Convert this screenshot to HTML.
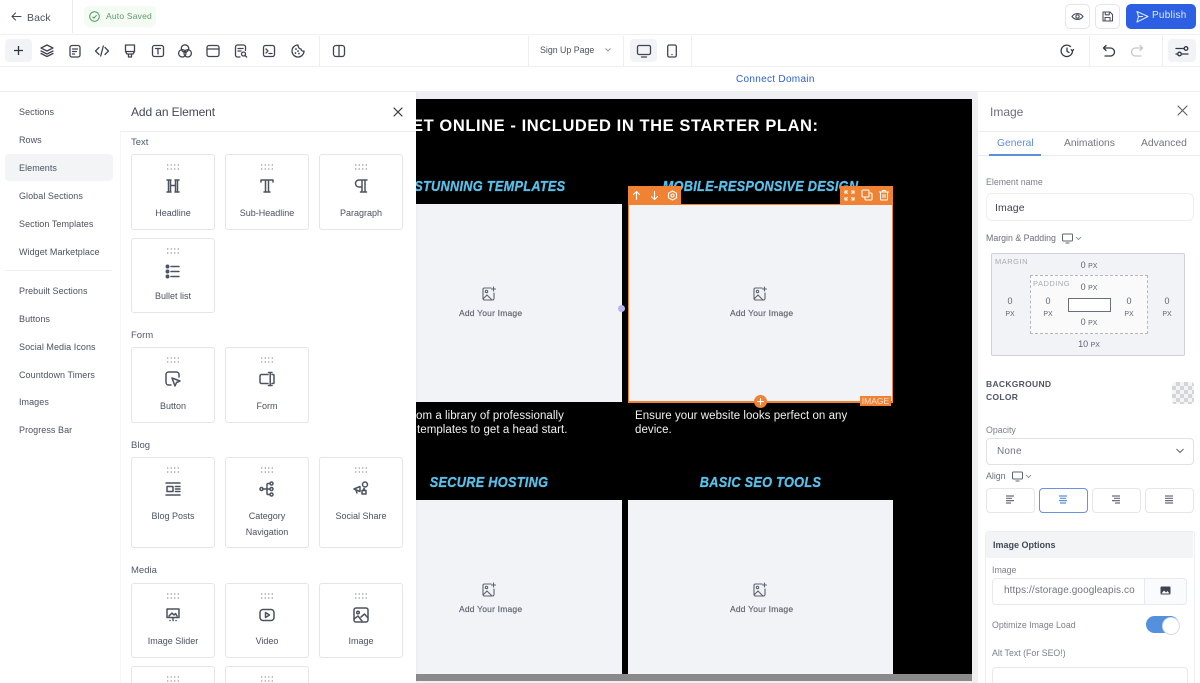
<!DOCTYPE html>
<html><head><meta charset="utf-8"><style>
html,body{margin:0;padding:0;width:1200px;height:683px;overflow:hidden;background:#fff}
body{position:relative;font-family:"Liberation Sans",sans-serif;color:#4a5160;-webkit-font-smoothing:antialiased}
.a,.t,.c,svg{position:absolute}
.t{white-space:nowrap;line-height:14px}
.nav{left:19px;font-size:9px;letter-spacing:.06px;color:#4a5160}
.sec{left:131px;font-size:9.5px;letter-spacing:0;color:#50586a}
.c{width:82px;border:1px solid #e3e5e9;border-radius:3px;background:#fff}
.c i{position:absolute;left:34px;top:8px;width:14px;height:8px;background:radial-gradient(circle,#a0a4ad .7px,transparent .9px) 0 0/3.500px 4px}
.l{position:absolute;left:0;width:82px;text-align:center;font-size:9px;letter-spacing:0;color:#4a5160;line-height:16px}
.ic{position:absolute;left:32px;top:22px;width:18px;height:18px;fill:none;stroke:#4c525f;stroke-width:1.500;stroke-linecap:round;stroke-linejoin:round}
.tb{fill:none;stroke:#3f4450;stroke-width:1.300;stroke-linecap:round;stroke-linejoin:round;width:16px;height:16px;top:43px}
.h{font-family:"Liberation Sans",sans-serif;font-weight:700;font-style:italic;color:#58c0ea;font-size:14.500px;letter-spacing:.3px;text-align:center;transform:scaleX(.88);-webkit-text-stroke:.3px #58c0ea}
.ph{background:#f1f3f7}
.add{font-size:8.500px;color:#5d626d;letter-spacing:.2px;-webkit-text-stroke:.15px #5d626d}
.w{color:#f2f2f2;font-size:11.500px;letter-spacing:.05px;line-height:14px}
.px{font-size:9px;color:#5f6572;text-align:center;line-height:12px}
.px small{font-size:7px}
.lab{font-size:8.800px;letter-spacing:0;color:#7a7f8a}
.alb{top:488px;height:23px;border:1px solid #e4e6ea;border-radius:4px;background:#fff}
.wi{fill:none;stroke:#fff;stroke-width:1.100;stroke-linecap:round;stroke-linejoin:round}
</style></head><body>

<!-- top bars -->
<div class="a" style="left:0;top:34px;width:1200px;height:1px;background:#eef0f2"></div>
<div class="a" style="left:0;top:66px;width:1200px;height:1px;background:#eef0f2"></div>
<div class="a" style="left:72px;top:0;width:1px;height:33px;background:#e9ebee"></div>
<svg style="left:10px;top:10px" width="13" height="13" viewBox="0 0 13 13" fill="none" stroke="#454a56" stroke-width="1.100" stroke-linecap="round" stroke-linejoin="round"><path d="M11 6.500H2.500M5.500 3 2 6.500 5.500 10"/></svg>
<div class="t" style="left:27px;top:11px;font-size:10.500px;letter-spacing:.1px;color:#4a5160">Back</div>
<div class="a" style="left:84px;top:6px;width:72px;height:21px;border-radius:5px;background:#f3fbf3"></div>
<svg style="left:88px;top:10px" width="13" height="13" viewBox="0 0 13 13" fill="none" stroke="#4f9a5c" stroke-width="1"><circle cx="6.500" cy="6.500" r="4.800"/><path d="M4.500 6.700 6 8.100 8.600 5.200"/></svg>
<div class="t" style="left:106px;top:9px;font-size:8.500px;letter-spacing:.2px;color:#5c9a68">Auto Saved</div>

<div class="a" style="left:1065px;top:4px;width:23px;height:23px;border:1px solid #e3e5e9;border-radius:5px"></div>
<svg style="left:1071px;top:10px" width="13" height="13" viewBox="0 0 13 13" fill="none" stroke="#4a4f5c" stroke-width="1.100"><path d="M1 6.500C3.800 2.600 9.200 2.600 12 6.500 9.200 10.400 3.800 10.400 1 6.500Z"/><circle cx="6.500" cy="6.500" r="1.700"/></svg>
<div class="a" style="left:1095px;top:4px;width:23px;height:23px;border:1px solid #e3e5e9;border-radius:5px"></div>
<svg style="left:1101px;top:10px" width="13" height="13" viewBox="0 0 13 13" fill="none" stroke="#4a4f5c" stroke-width="1.100" stroke-linejoin="round"><path d="M2 2h7l2.500 2.500V11H2ZM4.300 2v2.800h4V2M4 11V7.500h5V11"/></svg>
<div class="a" style="left:1126px;top:4px;width:70px;height:25px;border-radius:5px;background:#2d5fe3"></div>
<svg style="left:1135px;top:9px" width="15" height="15" viewBox="0 0 15 15" fill="none" stroke="#dfe8ff" stroke-width="1.100" stroke-linejoin="round"><path d="M2 2.500 13 7.500 2 13 3.500 7.500ZM3.500 7.500H8"/></svg>
<div class="t" style="left:1152px;top:9px;font-size:10px;letter-spacing:.25px;color:#dfe8ff">Publish</div>

<!-- tool row -->
<div class="a" style="left:5px;top:39px;width:27px;height:23px;border-radius:4px;background:#f1f3f6"></div>
<svg style="left:12px;top:44px" width="13" height="13" viewBox="0 0 13 13" fill="none" stroke="#2f3440" stroke-width="1.300"><path d="M6.500 2v9M2 6.500h9"/></svg>
<svg class="tb" style="left:39px" viewBox="0 0 16 16"><path d="M8 2 14 5 8 8 2 5ZM2 8l6 3 6-3M2 10.500l6 3 6-3"/></svg>
<svg class="tb" style="left:67px" viewBox="0 0 16 16"><rect x="3" y="2.500" width="10" height="11.500" rx="2"/><path d="M5.500 6h5M5.500 8.500h4M5.500 11h2"/></svg>
<svg class="tb" style="left:94px" viewBox="0 0 16 16"><path d="M5 4.500 1.500 8 5 11.500M11 4.500 14.500 8 11 11.500M9.300 3 6.700 13"/></svg>
<svg class="tb" style="left:122px" viewBox="0 0 16 16"><path d="M3.500 2h9v6.500h-9ZM3.500 8.500 5 11h6l1.500-2.500M6.500 11v3h3v-3"/></svg>
<svg class="tb" style="left:150px" viewBox="0 0 16 16"><rect x="2.500" y="2.500" width="11" height="11" rx="2"/><path d="M5.500 5.500h5M8 5.500v5.500"/></svg>
<svg class="tb" style="left:177px" viewBox="0 0 16 16"><circle cx="8" cy="5.500" r="3.700"/><circle cx="5.300" cy="10.300" r="3.700"/><circle cx="10.700" cy="10.300" r="3.700"/></svg>
<svg class="tb" style="left:205px" viewBox="0 0 16 16"><rect x="2" y="2.500" width="12" height="11" rx="2"/><path d="M2 6h12"/></svg>
<svg class="tb" style="left:233px" viewBox="0 0 16 16"><path d="M7 14H4.500a2 2 0 0 1-2-2V4a2 2 0 0 1 2-2h6a2 2 0 0 1 2 2v3.500M5 5.500h5M5 8h3"/><circle cx="10.500" cy="11" r="2"/><path d="M12 12.500l1.700 1.500"/></svg>
<svg class="tb" style="left:261px" viewBox="0 0 16 16"><rect x="2.500" y="2.500" width="11" height="11" rx="2"/><path d="M5 6l2 2-2 2M8 10.500h3"/></svg>
<svg class="tb" style="left:290px" viewBox="0 0 16 16"><path d="M8 2a6 6 0 1 0 6 6c-1.500.5-3-.5-3-2-1.500 0-3-1.500-3-4Z"/><path d="M6 6v.1M5.500 10v.1M9 10.500v.1M8 8v.1" stroke-width="1.800"/></svg>
<div class="a" style="left:319px;top:36px;width:1px;height:30px;background:#eceef1"></div>
<svg class="tb" style="left:331px" viewBox="0 0 16 16"><rect x="2.500" y="2.500" width="11" height="11" rx="2.500"/><path d="M8 2.500v11"/></svg>

<div class="a" style="left:528px;top:36px;width:1px;height:30px;background:#eceef1"></div>
<div class="t" style="left:540px;top:43px;font-size:8.800px;letter-spacing:0;color:#4a5160">Sign Up Page</div>
<svg style="left:604px;top:47px" width="8" height="6" viewBox="0 0 8 6" fill="none" stroke="#8a8f99" stroke-width=".9"><path d="M1.500 1.500 4 4 6.500 1.500"/></svg>
<div class="a" style="left:623px;top:36px;width:1px;height:30px;background:#eceef1"></div>
<div class="a" style="left:630px;top:39px;width:27px;height:23px;border-radius:4px;background:#f1f3f6"></div>
<svg class="tb" style="left:636px" viewBox="0 0 16 16"><rect x="1.500" y="2.500" width="13" height="9" rx="1.500"/><path d="M5.500 14h5"/></svg>
<svg class="tb" style="left:664px" viewBox="0 0 16 16"><rect x="3.700" y="2" width="8.600" height="12" rx="1.500"/><path d="M8 11.500v.1"/></svg>
<div class="a" style="left:691px;top:36px;width:1px;height:30px;background:#eceef1"></div>

<svg class="tb" style="left:1059px;stroke:#333844" viewBox="0 0 16 16"><path d="M13.500 8A5.700 5.700 0 1 1 11.500 3.500M8 5v3.300l2 1.200M14.500 6.500l-1 1.500-1.300-1.300"/></svg>
<div class="a" style="left:1089px;top:36px;width:1px;height:30px;background:#eceef1"></div>
<svg class="tb" style="left:1101px;stroke:#333844" viewBox="0 0 16 16"><path d="M5 2.500 2.500 5 5 7.500M2.500 5h7a3.500 3.500 0 0 1 0 8H4"/></svg>
<svg class="tb" style="left:1129px;stroke:#c4c7cd" viewBox="0 0 16 16"><path d="M11 2.500 13.500 5 11 7.500M13.500 5h-7a3.500 3.500 0 0 0 0 8H12"/></svg>
<div class="a" style="left:1162px;top:36px;width:1px;height:30px;background:#eceef1"></div>
<div class="a" style="left:1168px;top:39px;width:28px;height:23px;border-radius:4px;background:#f1f3f6"></div>
<svg class="tb" style="left:1174px;stroke:#333844" viewBox="0 0 16 16"><path d="M2 5.500h8M2 11h2"/><circle cx="12" cy="5.500" r="1.800"/><path d="M7.500 11H14"/><circle cx="5.500" cy="11" r="1.800"/></svg>

<div class="t" style="left:736px;top:73px;font-size:10px;letter-spacing:.3px;color:#2d5fd0">Connect Domain</div>

<!-- work area -->
<div class="a" style="left:0;top:91px;width:1200px;height:592px;background:#eff0f1"></div>

<!-- canvas -->
<div class="a" style="left:416px;top:99px;width:556px;height:575px;background:#000;overflow:hidden">
  <div class="t" style="left:-4px;top:18px;font-size:16.500px;font-weight:700;letter-spacing:.58px;color:#fff;line-height:19px">ET ONLINE - INCLUDED IN THE STARTER PLAN:</div>
  <div class="t h" style="left:-12px;top:81px;width:170px;line-height:15px">STUNNING TEMPLATES</div>
  <div class="t h" style="left:212px;top:81px;width:265px;line-height:15px">MOBILE-RESPONSIVE DESIGN</div>
  <div class="a ph" style="left:0;top:105px;width:206px;height:198px"></div>
  <div class="a ph" style="left:212px;top:105px;width:265px;height:198px"></div>
  <div class="t w" style="left:0;top:310px">om a library of professionally</div>
  <div class="t w" style="left:1px;top:324px">templates to get a head start.</div>
  <div class="t w" style="left:219px;top:310px">Ensure your website looks perfect on any</div>
  <div class="t w" style="left:219px;top:324px">device.</div>
  <div class="t h" style="left:0;top:377px;width:146px;line-height:15px">SECURE HOSTING</div>
  <div class="t h" style="left:212px;top:377px;width:265px;line-height:15px">BASIC SEO TOOLS</div>
  <div class="a ph" style="left:0;top:401px;width:206px;height:174px"></div>
  <div class="a ph" style="left:212px;top:401px;width:265px;height:174px"></div>
</div>
<div class="a" style="left:416px;top:674px;width:556px;height:7px;background:#8a8a8a"></div>

<!-- placeholders -->
<svg style="left:481px;top:286px" width="16" height="16" viewBox="0 0 16 16" fill="none" stroke="#5d626d" stroke-width="1.100" stroke-linecap="round" stroke-linejoin="round"><path d="M10 2H3.500A1.500 1.500 0 0 0 2 3.500v9A1.500 1.500 0 0 0 3.500 14h8a1.500 1.500 0 0 0 1.500-1.500V7M2.500 12.500 6 9l5 5M12.500 1v4M10.500 3h4"/><circle cx="5.500" cy="5.500" r="1.200"/></svg>
<div class="t add" style="left:459px;top:306px">Add Your Image</div>
<svg style="left:752px;top:286px" width="16" height="16" viewBox="0 0 16 16" fill="none" stroke="#5d626d" stroke-width="1.100" stroke-linecap="round" stroke-linejoin="round"><path d="M10 2H3.500A1.500 1.500 0 0 0 2 3.500v9A1.500 1.500 0 0 0 3.500 14h8a1.500 1.500 0 0 0 1.500-1.500V7M2.500 12.500 6 9l5 5M12.500 1v4M10.500 3h4"/><circle cx="5.500" cy="5.500" r="1.200"/></svg>
<div class="t add" style="left:730px;top:306px">Add Your Image</div>
<svg style="left:481px;top:582px" width="16" height="16" viewBox="0 0 16 16" fill="none" stroke="#5d626d" stroke-width="1.100" stroke-linecap="round" stroke-linejoin="round"><path d="M10 2H3.500A1.500 1.500 0 0 0 2 3.500v9A1.500 1.500 0 0 0 3.500 14h8a1.500 1.500 0 0 0 1.500-1.500V7M2.500 12.500 6 9l5 5M12.500 1v4M10.500 3h4"/><circle cx="5.500" cy="5.500" r="1.200"/></svg>
<div class="t add" style="left:459px;top:602px">Add Your Image</div>
<svg style="left:752px;top:582px" width="16" height="16" viewBox="0 0 16 16" fill="none" stroke="#5d626d" stroke-width="1.100" stroke-linecap="round" stroke-linejoin="round"><path d="M10 2H3.500A1.500 1.500 0 0 0 2 3.500v9A1.500 1.500 0 0 0 3.500 14h8a1.500 1.500 0 0 0 1.500-1.500V7M2.500 12.500 6 9l5 5M12.500 1v4M10.500 3h4"/><circle cx="5.500" cy="5.500" r="1.200"/></svg>
<div class="t add" style="left:730px;top:602px">Add Your Image</div>

<!-- selection -->
<div class="a" style="left:628px;top:204px;width:263px;height:196px;border:1px solid #ef8233;border-bottom-width:2px"></div>
<div class="a" style="left:628px;top:186px;width:53px;height:18px;background:#ef8233"></div>
<div class="a" style="left:840px;top:186px;width:53px;height:18px;background:#ef8233"></div>
<svg class="wi" style="left:631px;top:190px" width="11" height="11" viewBox="0 0 11 11"><path d="M5.500 9.500v-8M2.500 4.500l3-3 3 3"/></svg>
<svg class="wi" style="left:649px;top:190px" width="11" height="11" viewBox="0 0 11 11"><path d="M5.500 1.500v8M2.500 6.500l3 3 3-3"/></svg>
<svg class="wi" style="left:667px;top:190px" width="11" height="11" viewBox="0 0 11 11"><path d="M5.500 1 9.500 3.200v4.600L5.500 10 1.500 7.800V3.200Z"/><circle cx="5.500" cy="5.500" r="1.500"/></svg>
<svg class="wi" style="left:844px;top:190px" width="11" height="11" viewBox="0 0 11 11"><path d="M1 3.500V1h2.500M7.500 1H10v2.500M1 7.500V10h2.500M10 7.500V10H7.500M1.500 1.500l2 2M9.500 1.500l-2 2M1.500 9.500l2-2M9.500 9.500l-2-2"/></svg>
<svg class="wi" style="left:861px;top:189px" width="12" height="12" viewBox="0 0 12 12"><rect x="1" y="1" width="7" height="7" rx="1"/><path d="M8 4h2a1 1 0 0 1 1 1v5a1 1 0 0 1-1 1H5a1 1 0 0 1-1-1V8"/></svg>
<svg class="wi" style="left:878px;top:189px" width="12" height="12" viewBox="0 0 12 12"><path d="M1.500 3h9M4.500 3V1.500h3V3M2.500 3v7a1 1 0 0 0 1 1h5a1 1 0 0 0 1-1V3M5 5.500v3M7 5.500v3"/></svg>
<div class="a" style="left:754px;top:395px;width:13px;height:13px;border-radius:50%;background:#ef8233"></div>
<svg class="wi" style="left:755px;top:396px" width="11" height="11" viewBox="0 0 11 11"><path d="M5.500 2.500v6M2.500 5.500h6"/></svg>
<div class="t" style="left:860px;top:396px;width:31px;height:10px;background:#ef8233;color:#fbe3d0;font-size:8.500px;line-height:10px;text-align:center;letter-spacing:0">IMAGE</div>
<div class="a" style="left:618px;top:305px;width:7px;height:7px;border-radius:50%;background:#bcb5ee"></div>

<!-- left panel -->
<div class="a" style="left:0;top:92px;width:416px;height:591px;background:#fff;box-shadow:1px 0 2px rgba(0,0,0,.04)"></div>
<div class="a" style="left:120px;top:131px;width:296px;height:1px;background:#eceef1"></div>
<div class="a" style="left:120px;top:132px;width:1px;height:551px;background:#f4f5f6"></div>
<div class="t" style="left:131px;top:105px;font-size:12px;letter-spacing:-.1px;color:#434958">Add an Element</div>
<svg style="left:392px;top:106px" width="12" height="12" viewBox="0 0 12 12" fill="none" stroke="#2f3440" stroke-width="1.200" stroke-linecap="round"><path d="M2 2l8 8M10 2l-8 8"/></svg>

<div class="a" style="left:5px;top:154px;width:108px;height:27px;border-radius:4px;background:#f2f4f6"></div>
<div class="t nav" style="top:105px">Sections</div>
<div class="t nav" style="top:133px">Rows</div>
<div class="t nav" style="top:161px">Elements</div>
<div class="t nav" style="top:189px">Global Sections</div>
<div class="t nav" style="top:217px">Section Templates</div>
<div class="t nav" style="top:245px">Widget Marketplace</div>
<div class="a" style="left:5px;top:270px;width:107px;height:1px;background:#eff0f2"></div>
<div class="t nav" style="top:284px">Prebuilt Sections</div>
<div class="t nav" style="top:312px">Buttons</div>
<div class="t nav" style="top:340px">Social Media Icons</div>
<div class="t nav" style="top:368px">Countdown Timers</div>
<div class="t nav" style="top:395px">Images</div>
<div class="t nav" style="top:423px">Progress Bar</div>

<div class="t sec" style="top:136px">Text</div>
<div class="c" style="left:131px;top:154px;height:74px"><i></i><svg class="ic" viewBox="0 0 18 18"><path d="M3 3h4M3 15h4M11 3h4M11 15h4M4.500 3v12M6.500 3v12M11.500 3v12M13.500 3v12M6.500 8.500h5"/></svg><div class="l" style="top:50px">Headline</div></div>
<div class="c" style="left:225px;top:154px;height:74px"><i></i><svg class="ic" viewBox="0 0 18 18"><path d="M3 5V3h12v2M7.500 3v12M10.500 3v12M6 15h6"/></svg><div class="l" style="top:50px">Sub-Headline</div></div>
<div class="c" style="left:319px;top:154px;height:74px"><i></i><svg class="ic" viewBox="0 0 18 18"><path d="M15 3H7a3.500 3.500 0 0 0 0 7h3M10 3v12M13 3v12M8.500 15h6"/></svg><div class="l" style="top:50px">Paragraph</div></div>
<div class="c" style="left:131px;top:238px;height:73px"><i></i><svg class="ic" style="top:24px" viewBox="0 0 18 18"><path d="M7 3.500h8M7 8.500h8M7 13.500h8"/><circle cx="3.500" cy="3.500" r="1.200" fill="#555b68"/><circle cx="3.500" cy="8.500" r="1.200" fill="#555b68"/><circle cx="3.500" cy="13.500" r="1.200" fill="#555b68"/></svg><div class="l" style="top:49px">Bullet list</div></div>

<div class="t sec" style="top:329px">Form</div>
<div class="c" style="left:131px;top:347px;height:74px"><i></i><svg class="ic" viewBox="0 0 18 18"><path d="M7 15H4.500A2.500 2.500 0 0 1 2 12.500v-8A2.500 2.500 0 0 1 4.500 2h8A2.500 2.500 0 0 1 15 4.500V7M8 8l8 3-3.500 1.500L11 16Z"/></svg><div class="l" style="top:50px">Button</div></div>
<div class="c" style="left:225px;top:347px;height:74px"><i></i><svg class="ic" viewBox="0 0 18 18"><path d="M10 4.500H3.500A1.500 1.500 0 0 0 2 6v6a1.500 1.500 0 0 0 1.500 1.500H10M14 4.500h1a1 1 0 0 1 1 1v7a1 1 0 0 1-1 1h-1M10.500 2.500h3.500M10.500 15.500h3.500M12.200 2.500v13"/></svg><div class="l" style="top:50px">Form</div></div>

<div class="t sec" style="top:439px">Blog</div>
<div class="c" style="left:131px;top:457px;height:89px"><i></i><svg class="ic" viewBox="0 0 18 18"><path d="M2 3h14M2 15h14M3 6.500h6v5H3ZM11.500 6.500H16M11.500 9H16M11.500 11.500H16"/></svg><div class="l" style="top:50px">Blog Posts</div></div>
<div class="c" style="left:225px;top:457px;height:89px"><i></i><svg class="ic" viewBox="0 0 18 18"><circle cx="3.500" cy="9" r="1.500"/><circle cx="13.500" cy="3.500" r="1.500"/><circle cx="13.500" cy="9" r="1.500"/><circle cx="13.500" cy="14.500" r="1.500"/><path d="M5 9h7M12 3.500H10a1 1 0 0 0-1 1v9a1 1 0 0 0 1 1h2"/></svg><div class="l" style="top:50px">Category<br></div><div class="l" style="top:66px">Navigation</div></div>
<div class="c" style="left:319px;top:457px;height:89px"><i></i><svg class="ic" viewBox="0 0 18 18"><path d="M2 9l6-2.500v5ZM4 10.500 5 13M10 10.500h4v3.500h-4ZM11 10.500l1-2 1 2"/><circle cx="13" cy="4.500" r="2.500"/></svg><div class="l" style="top:50px">Social Share</div></div>

<div class="t sec" style="top:564px">Media</div>
<div class="c" style="left:131px;top:583px;height:73px"><i></i><svg class="ic" viewBox="0 0 18 18"><path d="M3 3h12v8.500H3ZM5 10l3-3 2 2 1.500-1.500L13 10M6 14.500h.1M9 14.500h.1M12 14.500h.1M9 11.500v2"/></svg><div class="l" style="top:49px">Image Slider</div></div>
<div class="c" style="left:225px;top:583px;height:73px"><i></i><svg class="ic" viewBox="0 0 18 18"><rect x="2" y="3.500" width="14" height="11" rx="3"/><path d="M7.500 6.500 11.500 9 7.500 11.500Z"/></svg><div class="l" style="top:49px">Video</div></div>
<div class="c" style="left:319px;top:583px;height:73px"><i></i><svg class="ic" viewBox="0 0 18 18"><rect x="2" y="2" width="14" height="14" rx="2"/><circle cx="6" cy="6.500" r="1.300"/><path d="M2 13l4-3 4 5M9 11l3.500-3L16 12"/></svg><div class="l" style="top:49px">Image</div></div>
<div class="c" style="left:131px;top:666px;height:40px"><i></i></div>
<div class="c" style="left:225px;top:666px;height:40px"><i></i></div>

<!-- right panel -->
<div class="a" style="left:978px;top:92px;width:222px;height:591px;background:#fff"></div>
<div class="a" style="left:978px;top:131px;width:222px;height:1px;background:#eceef1"></div>
<div class="a" style="left:978px;top:155px;width:222px;height:1px;background:#e9ebee"></div>
<div class="t" style="left:990px;top:105px;font-size:12px;letter-spacing:0;color:#6a6f7a">Image</div>
<svg style="left:1176px;top:104px" width="13" height="13" viewBox="0 0 13 13" fill="none" stroke="#5a5f6a" stroke-width="1.100" stroke-linecap="round"><path d="M2 2l9 9M11 2l-9 9"/></svg>
<div class="t" style="left:997px;top:137px;font-size:10.300px;letter-spacing:0;color:#5c8fdc">General</div>
<div class="a" style="left:989px;top:154px;width:52px;height:2px;background:#5c8fdc"></div>
<div class="t" style="left:1064px;top:137px;font-size:10.300px;letter-spacing:0;color:#70757f">Animations</div>
<div class="t" style="left:1141px;top:137px;font-size:10.300px;letter-spacing:0;color:#70757f">Advanced</div>

<div class="t lab" style="left:986px;top:175px">Element name</div>
<div class="a" style="left:986px;top:193px;width:206px;height:26px;border:1px solid #eceef1;border-radius:6px"></div>
<div class="t" style="left:995px;top:201px;font-size:10.500px;letter-spacing:.1px;color:#3d4350">Image</div>

<div class="t lab" style="left:986px;top:231px;color:#6a6f7a">Margin &amp; Padding</div>
<svg style="left:1061px;top:232px" width="13" height="13" viewBox="0 0 13 13" fill="none" stroke="#5f6470" stroke-width="1"><rect x="1.500" y="2" width="10" height="7" rx="1"/><path d="M4.500 11h4"/></svg>
<svg style="left:1075px;top:236px" width="7" height="5" viewBox="0 0 7 5" fill="none" stroke="#7a7f8a" stroke-width=".8"><path d="M1 1l2.500 2.500L6 1"/></svg>

<div class="a" style="left:991px;top:253px;width:192px;height:101px;border:1px solid #cfd2d8;border-radius:2px;background:#f2f3f7"></div>
<div class="t" style="left:995px;top:255px;font-size:7.500px;letter-spacing:.5px;color:#a6aab3">MARGIN</div>
<div class="a" style="left:1030px;top:275px;width:116px;height:57px;border:1px dashed #b5b8bf;background:#fafafb"></div>
<div class="t" style="left:1033px;top:277px;font-size:7.500px;letter-spacing:.5px;color:#a6aab3">PADDING</div>
<div class="a" style="left:1068px;top:298px;width:41px;height:12px;border:1px solid #6a6f7a;background:#fff"></div>
<div class="t px" style="left:1070px;top:259px;width:38px">0 <small>PX</small></div>
<div class="t px" style="left:1070px;top:281px;width:38px">0 <small>PX</small></div>
<div class="t px" style="left:1070px;top:316px;width:38px">0 <small>PX</small></div>
<div class="t px" style="left:1070px;top:338px;width:38px">10 <small>PX</small></div>
<div class="t px" style="left:1000px;top:295px;width:20px">0<br><small>PX</small></div>
<div class="t px" style="left:1038px;top:295px;width:20px">0<br><small>PX</small></div>
<div class="t px" style="left:1119px;top:295px;width:20px">0<br><small>PX</small></div>
<div class="t px" style="left:1157px;top:295px;width:20px">0<br><small>PX</small></div>

<div class="t" style="left:986px;top:378px;font-size:8.500px;font-weight:700;letter-spacing:.3px;color:#4f5563;line-height:13px;white-space:normal;width:80px">BACKGROUND COLOR</div>
<div class="a" style="left:1172px;top:382px;width:22px;height:22px;border-radius:3px;background:repeating-conic-gradient(#d4d5d8 0 25%,#f4f4f5 0 50%) 0 0/8px 8px"></div>

<div class="t lab" style="left:986px;top:423px">Opacity</div>
<div class="a" style="left:986px;top:438px;width:206px;height:25px;border:1px solid #dfe1e6;border-radius:4px"></div>
<div class="t" style="left:997px;top:445px;font-size:10px;letter-spacing:.2px;color:#70757f">None</div>
<svg style="left:1175px;top:447px" width="10" height="8" viewBox="0 0 10 8" fill="none" stroke="#5f6470" stroke-width="1"><path d="M1.500 2 5 5.500 8.500 2"/></svg>
<div class="t lab" style="left:986px;top:469px;color:#6a6f7a">Align</div>
<svg style="left:1011px;top:470px" width="13" height="13" viewBox="0 0 13 13" fill="none" stroke="#5f6470" stroke-width="1"><rect x="1.500" y="2" width="10" height="7" rx="1"/><path d="M4.500 11h4"/></svg>
<svg style="left:1025px;top:474px" width="7" height="5" viewBox="0 0 7 5" fill="none" stroke="#7a7f8a" stroke-width=".8"><path d="M1 1l2.500 2.500L6 1"/></svg>
<div class="a alb" style="left:986px;width:47px"></div>
<div class="a alb" style="left:1039px;width:47px;border-color:#6f8fe0"></div>
<div class="a alb" style="left:1092px;width:47px"></div>
<div class="a alb" style="left:1145px;width:47px"></div>
<svg style="left:1005px;top:495px" width="10" height="9" viewBox="0 0 10 9" fill="none" stroke="#6a6f7a" stroke-width="1.200"><path d="M1 1h8M1 3.300h6M1 5.600h8M1 8h5"/></svg>
<svg style="left:1058px;top:495px" width="10" height="9" viewBox="0 0 10 9" fill="none" stroke="#5c8fdc" stroke-width="1.200"><path d="M1 1h8M2 3.300h6M1 5.600h8M2 8h6"/></svg>
<svg style="left:1111px;top:495px" width="10" height="9" viewBox="0 0 10 9" fill="none" stroke="#6a6f7a" stroke-width="1.200"><path d="M1 1h8M3 3.300h6M1 5.600h8M4 8h5"/></svg>
<svg style="left:1164px;top:495px" width="10" height="9" viewBox="0 0 10 9" fill="none" stroke="#6a6f7a" stroke-width="1.200"><path d="M1 1h8M1 3.300h8M1 5.600h8M1 8h8"/></svg>

<div class="a" style="left:985px;top:531px;width:208px;height:160px;border:1px solid #eceef1;border-radius:3px"></div>
<div class="a" style="left:986px;top:532px;width:207px;height:26px;background:#f2f4f5"></div>
<div class="t" style="left:993px;top:538px;font-size:9px;font-weight:700;letter-spacing:0;color:#434958">Image Options</div>
<div class="t lab" style="left:992px;top:563px">Image</div>
<div class="a" style="left:1143px;top:578px;width:43px;height:25px;border:1px solid #e7e9ec;border-left:none;border-radius:0 4px 4px 0;background:#fafbfc"></div>
<div class="a" style="left:992px;top:578px;width:151px;height:25px;border:1px solid #e7e9ec;border-radius:4px 0 0 4px;background:#fff"></div>
<div class="t" style="left:1004px;top:584px;font-size:10px;letter-spacing:.1px;color:#70757f">https://storage.googleapis.co</div>
<svg style="left:1160px;top:586px" width="11" height="9" viewBox="0 0 11 9"><rect x="0.500" y="0.500" width="10" height="8" rx="1" fill="#3d4350"/><path d="M1.500 7.500 4 4.500 6 6.500 7.500 5 9.500 7.500Z" fill="#fff"/></svg>
<div class="t lab" style="left:992px;top:618px">Optimize Image Load</div>
<div class="a" style="left:1146px;top:616px;width:33px;height:17px;border-radius:9px;background:#5590de"></div>
<div class="a" style="left:1162px;top:616.500px;width:16px;height:16px;border-radius:50%;background:#fff;border:.5px solid #d8dce2"></div>
<div class="t lab" style="left:992px;top:646px">Alt Text (For SEO!)</div>
<div class="a" style="left:992px;top:667px;width:194px;height:30px;border:1px solid #e7e9ec;border-radius:4px"></div>

</body></html>
